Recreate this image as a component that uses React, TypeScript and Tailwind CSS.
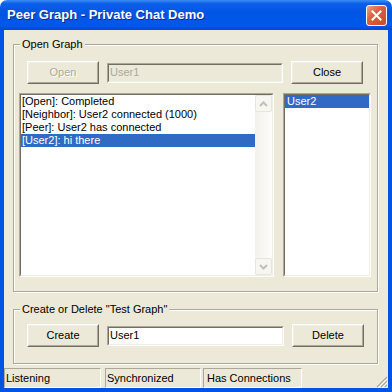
import React from 'react'

// Classic 3D bits on top of XP colours
const raised =
  'border border-t-white border-l-white border-r-[#716f64] border-b-[#716f64] bg-[#ece9d8]'
const raisedInner = 'border border-t-[#f1efe2] border-l-[#f1efe2] border-r-[#aca899] border-b-[#aca899]'

function Button({ label, disabled }: { label: string; disabled?: boolean }) {
  return (
    <div className={`w-[72px] h-[23px] shrink-0 ${raised}`}>
      <div className={`h-full flex items-center justify-center ${raisedInner}`}>
        <span className={disabled ? 'text-[#aca899] [text-shadow:1px_1px_0_#fff]' : ''}>{label}</span>
      </div>
    </div>
  )
}

function Sunken({ className, children, inner }: { className?: string; children?: React.ReactNode; inner?: string }) {
  return (
    <div className={`border border-t-[#aca899] border-l-[#aca899] border-r-white border-b-white ${className ?? ''}`}>
      <div className={`h-full border border-t-[#716f64] border-l-[#716f64] border-r-[#f1efe2] border-b-[#f1efe2] ${inner ?? ''}`}>
        {children}
      </div>
    </div>
  )
}

function TextBox({ value, disabled }: { value: string; disabled?: boolean }) {
  return (
    <Sunken
      className="flex-1 h-[20px]"
      inner={`flex items-center pl-[1px] ${disabled ? 'bg-[#ece9d8] text-[#aca899]' : 'bg-white'}`}
    >
      {value}
    </Sunken>
  )
}

function Group({ title, className, children }: { title: string; className?: string; children: React.ReactNode }) {
  return (
    <div
      className={`relative ml-[9px] mr-[10px] border border-[#aca899] shadow-[1px_1px_0_#fff,inset_1px_1px_0_#fff] ${className ?? ''}`}
    >
      <span className="absolute -top-[7px] left-[6px] px-[2px] bg-[#ece9d8] leading-[13px] whitespace-nowrap">
        {title}
      </span>
      {children}
    </div>
  )
}

function Chevron({ up }: { up?: boolean }) {
  return (
    <svg width="9" height="6" viewBox="0 0 9 6">
      <path
        d={up ? 'M1 5 L4.5 1.5 L8 5' : 'M1 1 L4.5 4.5 L8 1'}
        fill="none"
        stroke="#c3c1b4"
        strokeWidth="2"
      />
    </svg>
  )
}

const logLines = ['[Open]: Completed', '[Neighbor]: User2 connected (1000)', '[Peer]: User2 has connected', '[User2]: hi there']

export default function App() {
  return (
    <div className="w-[392px] h-[392px] flex flex-col font-['Liberation_Sans',Arial,sans-serif] text-[11px] leading-[13px] text-black bg-white">
      {/* Title bar */}
      <div className="h-[30px] shrink-0 rounded-t-[7px] flex items-center pl-[7px] pr-[5px] bg-[linear-gradient(to_bottom,#3d8ef6_0%,#0b5fe9_12%,#0054e3_45%,#0058ea_85%,#0049d3_100%)]">
        <span className="flex-1 text-white font-bold text-[13px] leading-[16px] [text-shadow:1px_1px_0_#0a2a8f]">
          Peer Graph - Private Chat Demo
        </span>
        <div className="w-[21px] h-[21px] rounded-[3px] border border-white bg-[linear-gradient(135deg,#f0a088_0%,#e0603c_40%,#cc4a25_100%)] flex items-center justify-center">
          <svg width="11" height="11" viewBox="0 0 11 11">
            <path d="M1.5 1.5 L9.5 9.5 M9.5 1.5 L1.5 9.5" stroke="#fff" strokeWidth="2" strokeLinecap="square" />
          </svg>
        </div>
      </div>

      {/* Body */}
      <div className="flex-1 flex flex-col bg-[#ece9d8] border-x-4 border-b-4 border-[#0054e3]">
        <Group title="Open Graph" className="mt-[14px] h-[248px] pt-[16px] pl-[5px] pr-[6px]">
          <div className="flex items-center gap-[8px] px-[8px]">
            <Button label="Open" disabled />
            <TextBox value="User1" disabled />
            <Button label="Close" />
          </div>
          <div className="flex gap-[9px] mt-[9px] h-[184px]">
            <Sunken className="w-[255px]" inner="bg-white flex">
              <div className="flex-1 flex flex-col">
                {logLines.map((line, i) => (
                  <div
                    key={line}
                    className={`h-[13px] pl-[1px] whitespace-nowrap ${i === 3 ? 'bg-[#316ac5] text-white' : ''}`}
                  >
                    {line}
                  </div>
                ))}
              </div>
              <div className="w-[17px] flex flex-col justify-between bg-[linear-gradient(to_right,#f3f1ea,#fdfdfa)]">
                <div className="h-[17px] rounded-[2px] border border-[#e8e6dc] bg-[#f7f6f1] flex items-center justify-center">
                  <Chevron up />
                </div>
                <div className="h-[17px] rounded-[2px] border border-[#e8e6dc] bg-[#f7f6f1] flex items-center justify-center">
                  <Chevron />
                </div>
              </div>
            </Sunken>
            <Sunken className="w-[88px]" inner="bg-white">
              <div className="h-[13px] pl-[2px] bg-[#316ac5] text-white">User2</div>
            </Sunken>
          </div>
        </Group>

        <Group title={'Create or Delete "Test Graph"'} className="mt-[17px] h-[55px] pt-[14px] px-[13px]">
          <div className="flex items-center gap-[8px]">
            <Button label="Create" />
            <TextBox value="User1" />
            <Button label="Delete" />
          </div>
        </Group>

        {/* Status bar */}
        <div className="mt-[4px] h-[20px] flex items-stretch">
          <div className="w-[97px] border border-t-[#aca899] border-l-[#aca899] border-r-white border-b-white flex items-center pl-[1px]">
            Listening
          </div>
          <div className="ml-[4px] w-[96px] border border-t-[#aca899] border-l-[#aca899] border-r-white border-b-white flex items-center pl-[1px]">
            Synchronized
          </div>
          <div className="ml-[2px] w-[99px] border border-t-[#aca899] border-l-[#aca899] border-r-white border-b-white flex items-center pl-[3px]">
            Has Connections
          </div>
          <div className="flex-1 flex items-end justify-end">
            <svg width="12" height="12" viewBox="0 0 12 12">
              <path d="M11 1 L1 11 M11 5 L5 11 M11 9 L9 11" stroke="#aca899" strokeWidth="1.2" />
              <path d="M12 2 L2 12 M12 6 L6 12 M12 10 L10 12" stroke="#fff" strokeWidth="1" />
            </svg>
          </div>
        </div>
      </div>
    </div>
  )
}
